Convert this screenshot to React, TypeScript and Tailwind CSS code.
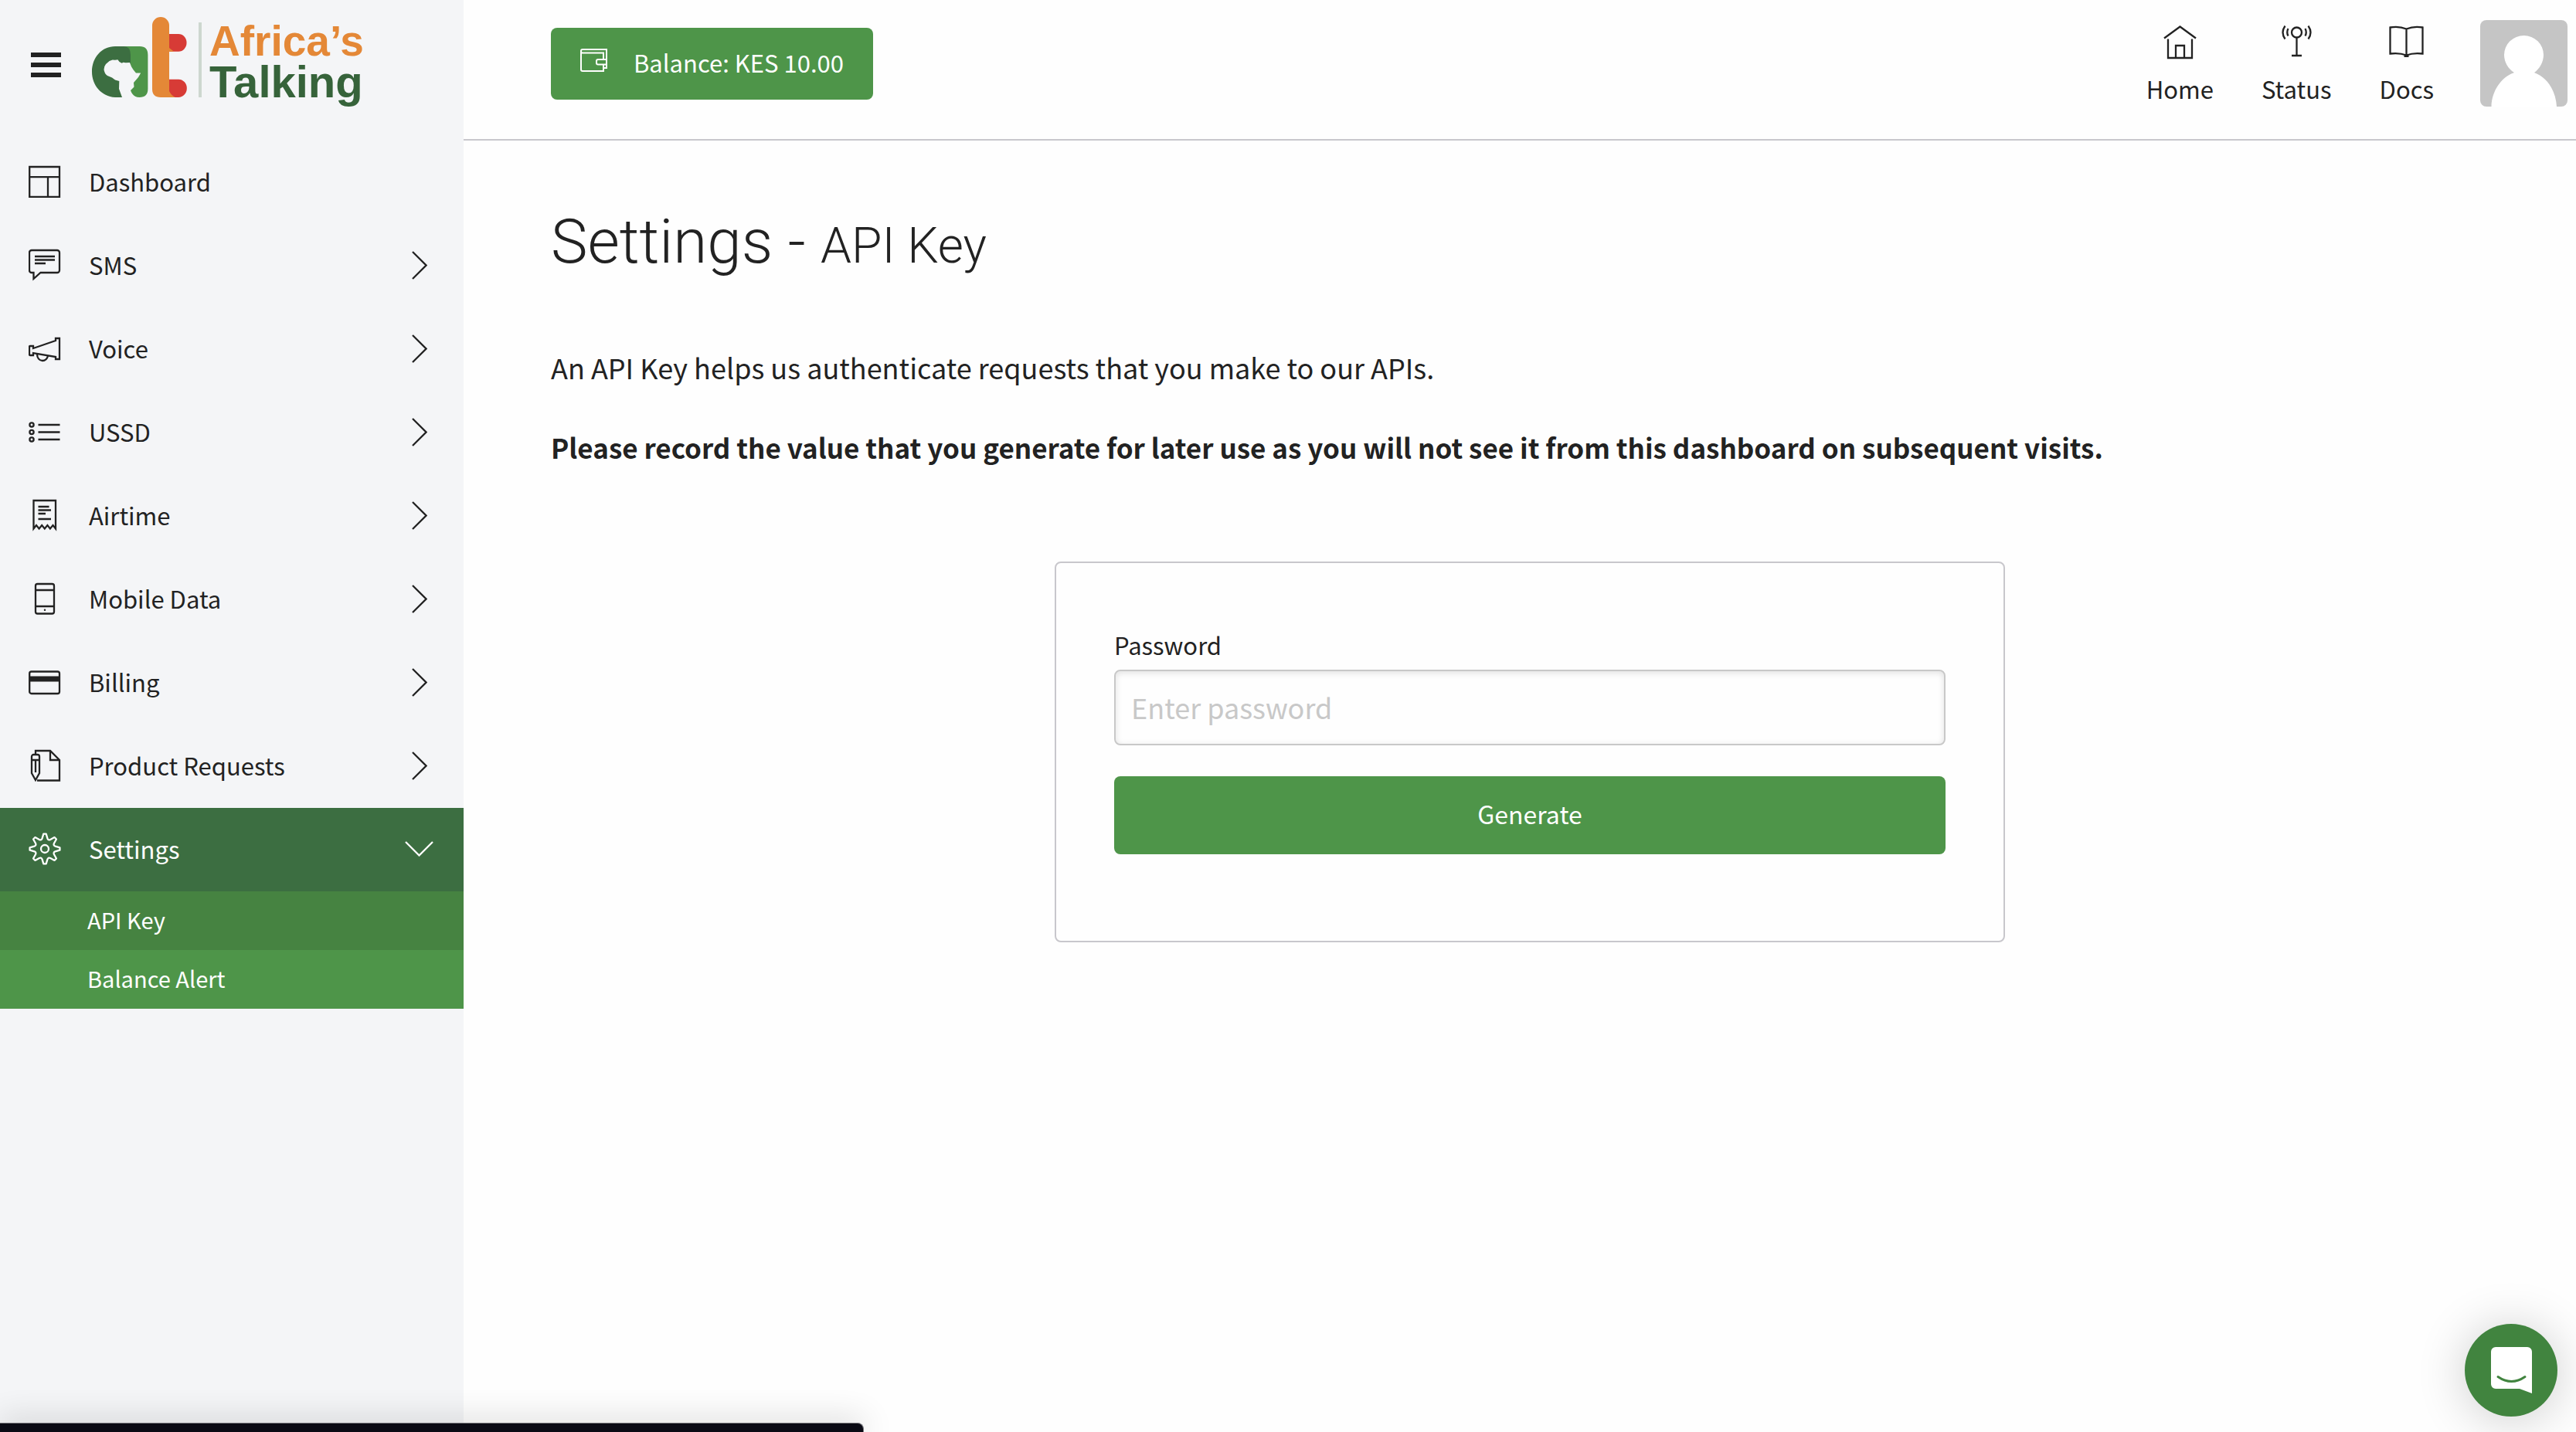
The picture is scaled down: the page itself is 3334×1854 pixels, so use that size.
import type { ReactNode } from 'react';

const gearPath = (() => {
  const point = (radius: number, degrees: number) => {
    const a = (degrees * Math.PI) / 180;
    return `${(21 + radius * Math.sin(a)).toFixed(2)} ${(21 - radius * Math.cos(a)).toFixed(2)}`;
  };
  const teeth: string[] = [];
  for (let k = 0; k < 8; k += 1) {
    const a = k * 45;
    teeth.push(`${point(19.5, a - 5)}L${point(19.5, a + 5)}L${point(14, a + 14)}Q${point(11.5, a + 22.5)} ${point(14, a + 31)}`);
  }
  return `M${teeth.join('L')}Z`;
})();

function LineIcon({ children }: { children: ReactNode }) {
  return (
    <svg
      className="h-[42px] w-[42px] shrink-0"
      viewBox="0 0 42 42"
      fill="none"
      stroke="currentColor"
      strokeWidth="2.3"
      aria-hidden="true"
    >
      {children}
    </svg>
  );
}

type NavEntry = { label: string; icon: ReactNode; expandable: boolean };

const entries: NavEntry[] = [
  {
    label: 'Dashboard',
    expandable: false,
    icon: <path d="M1.200 2h38.800v38.800H1.200zM1 15.200h39M25 15v26" />,
  },
  {
    label: 'SMS',
    expandable: true,
    icon: (
      <>
        <path d="M4 2h33a3 3 0 0 1 3 3v23a3 3 0 0 1-3 3H15.500l-9 8V31H4a3 3 0 0 1-3-3V5a3 3 0 0 1 3-3z" />
        <path d="M8 10h26M8 14.500h26M8 19h14" />
      </>
    ),
  },
  {
    label: 'Voice',
    expandable: true,
    icon: (
      <>
        <path d="M2 18h4v3L35 11V8h5v27h-5v-3L6 27v3H2a1 1 0 0 1-1-1V19a1 1 0 0 1 1-1z" />
        <path d="M11 28.500c0 5 3 8.500 7 8.500s6-2.500 7-6" />
      </>
    ),
  },
  {
    label: 'USSD',
    expandable: true,
    icon: (
      <>
        <circle cx="4" cy="12" r="2.600" />
        <circle cx="4" cy="21.500" r="2.600" />
        <circle cx="4" cy="31" r="2.600" />
        <path d="M12.500 12h28M12.500 21.500h28M12.500 31h28" />
      </>
    ),
  },
  {
    label: 'Airtime',
    expandable: true,
    icon: (
      <>
        <path d="M6.500 38.500V2h28.500v36.500l-3.500-4.500-3.600 4.500-3.500-4.500-3.600 4.500-3.600-4.500-3.600 4.500-3.600-4.500z" />
        <path d="M12.500 10h14M12.500 14.500h16.500M12.500 19h9.500M12.500 26h16.500" />
      </>
    ),
  },
  {
    label: 'Mobile Data',
    expandable: true,
    icon: (
      <>
        <rect x="9" y="2" width="24" height="38.500" rx="2.500" />
        <path d="M9 10h24M9 31h24" />
        <circle cx="21" cy="35.700" r="1.200" fill="currentColor" stroke="none" />
      </>
    ),
  },
  {
    label: 'Billing',
    expandable: true,
    icon: (
      <>
        <rect x="1.200" y="7.500" width="38.800" height="28.500" rx="2.500" />
        <path d="M1 17h39" strokeWidth="7" />
      </>
    ),
  },
  {
    label: 'Product Requests',
    expandable: true,
    icon: (
      <>
        <path d="M9 7V2h19l12 12v26.500H11" />
        <path d="M28 2v12h12" />
        <path d="M4 14v17l5 9 5-9V9.500a2.500 2.500 0 0 0-2.500-2.500h-5A2.500 2.500 0 0 0 4 9.500V14h10M9 15v15" />
      </>
    ),
  },
];

function ChevronRight() {
  return (
    <svg className="h-[37px] w-5" viewBox="0 0 20 37" fill="none" stroke="currentColor" strokeWidth="2.3" aria-hidden="true">
      <path d="M1 1l17.500 17.500L1 36" />
    </svg>
  );
}

function ChevronDown() {
  return (
    <svg className="h-5 w-[37px]" viewBox="0 0 37 20" fill="none" stroke="currentColor" strokeWidth="2.3" aria-hidden="true">
      <path d="M1 1l17.500 17.500L36 1" />
    </svg>
  );
}

function Logo() {
  return (
    <svg className="h-[120px] w-[350px] overflow-visible" viewBox="0 0 350 120" role="img" aria-label="Africa's Talking">
      <path fill="#4e9549" d="M30 38h32q10.400 0 10.400 11v44q0 11-10.900 11-6 0-11.500-5H40z" />
      <path fill="#3c6e41" d="M39 104H30C12 103 0 88 0 71 0 52 13 38 30 38h11q9 0 9 11v14L39 90z" />
      <path
        fill="#f4f5f7"
        d="M15.500 68q0-4 2.500-7l4.600-4 4-1.500 3.400.2 3.400-.4L35.500 58l3.200 1.700 1.800-1 3.100.6 5.400-.3 2 5.300 2.500 4 3.500 4.200 6.200-.1-3.200 5.600-6 7 .5 5.500-4.500 4.500q2 6 7.500 9H39l-4-11 .3-10L30 81.500l-4-3-6-2.500q-4-3-4.500-8z"
      />
      <path fill="#d73b36" d="M98 22h14a10.500 11.300 0 0 1 0 22.700H98zM98 80.700h14a10.500 11.300 0 0 1 0 23.300H98z" />
      <path fill="#e48837" d="M78 11a11 11 0 0 1 22 0v29l6 4.700h-6V96q3 6 8 8H89q-11 0-11-11z" />
      <path fill="#cdd7cf" d="M138 7h4v97h-4z" />
      <text x="152" y="50" fill="#e48837" className="font-['Liberation_Sans',sans-serif] text-[55px] leading-none font-bold">
        Africa’s
      </text>
      <text x="152" y="104" fill="#36633a" className="font-['Liberation_Sans',sans-serif] text-[58px] leading-none font-bold">
        Talking
      </text>
    </svg>
  );
}

function Sidebar() {
  return (
    <aside className="w-[600px] shrink-0 bg-[#f4f5f7]">
      <div className="flex h-[182px] items-start pl-10 pt-[22px]">
        <button type="button" aria-label="Toggle menu" className="mt-[46px] mr-10 flex flex-col gap-[7px]">
          <span className="h-1.5 w-[39px] bg-[#222]" />
          <span className="h-1.5 w-[39px] bg-[#222]" />
          <span className="h-1.5 w-[39px] bg-[#222]" />
        </button>
        <a href="#home">
          <Logo />
        </a>
      </div>
      <nav aria-label="Main">
        {entries.map((entry) => (
          <a key={entry.label} href="#section" className="flex h-27 items-center pr-[47px] pb-0.5 pl-[37px] text-[31px]">
            <LineIcon>{entry.icon}</LineIcon>
            <span className="ml-9 flex-1">{entry.label}</span>
            {entry.expandable && <ChevronRight />}
          </a>
        ))}
        <button
          type="button"
          aria-expanded="true"
          className="flex h-27 w-full items-center bg-[#3c6e41] pr-[39px] pb-0.5 pl-[37px] text-left text-[31px] text-white"
        >
          <LineIcon>
            <path d={gearPath} strokeLinejoin="round" />
            <circle cx="21" cy="21" r="5" />
          </LineIcon>
          <span className="ml-9 flex-1">Settings</span>
          <ChevronDown />
        </button>
        <a href="#api-key" aria-current="page" className="flex h-19 items-center bg-[#468341] pb-0.5 pl-[113px] text-[29px] text-white">
          API Key
        </a>
        <a href="#balance-alert" className="flex h-19 items-center bg-[#4e9549] pb-0.5 pl-[113px] text-[29px] text-white">
          Balance Alert
        </a>
      </nav>
    </aside>
  );
}

function HeaderLink({ label, children }: { label: string; children: ReactNode }) {
  return (
    <a href="#top" className="flex flex-col items-center gap-3.5">
      <svg className="h-11 w-[45px]" viewBox="0 0 45 44" fill="none" stroke="currentColor" strokeWidth="2.3" aria-hidden="true">
        {children}
      </svg>
      <span className="leading-[48px]">{label}</span>
    </a>
  );
}

function Header() {
  return (
    <header className="flex h-[182px] items-start justify-between border-b-2 border-[#c8c7cc] pr-[11px] pl-[113px] text-[31px]">
      <button type="button" className="mt-9 flex h-[93px] items-center rounded-lg bg-[#4e9549] px-[38px] text-white">
        <svg className="mb-2.5 h-[30px] w-[35px]" viewBox="0 0 35 30" fill="none" stroke="currentColor" strokeWidth="2" aria-hidden="true">
          <path d="M34 13V1H3a2 2 0 0 0-2 2v24a2 2 0 0 0 2 2h27v-8M1 3.500Q1 5.500 3 5.500h27V13" />
          <path d="M34 14H23a2 2 0 0 0-2 2v2.500a2 2 0 0 0 2 2h11zM34 20v5h-4" />
        </svg>
        <span className="mb-0.5 ml-[34px]">Balance: KES 10.00</span>
      </button>
      <div className="flex items-start gap-[60px] pt-[26px]">
        <nav aria-label="Quick links" className="flex gap-[62px] pt-[7px]">
          <HeaderLink label="Home">
            <path d="M2 16.500L22.500 1.500l20.500 15M7 17.500V42h31V17.500M17 42V26h11v16" />
          </HeaderLink>
          <HeaderLink label="Status">
            <circle cx="22.500" cy="9" r="6.500" />
            <path d="M22.500 15.500v23M16 39h13" />
            <path d="M11.500 4q-2.500 5 0 9.500M7.500.5Q1.500 9 7.500 17.500M33.500 4q2.500 5 0 9.500M37.500.5q6 8.500 0 17" />
          </HeaderLink>
          <HeaderLink label="Docs">
            <path d="M22.500 4.500Q13 .5 1.500 2.500v34q12-1.500 21 2 9-3.500 21-2v-34Q32 .5 22.500 4.500v34" />
            <path d="M19.500 39.500h6" strokeWidth="3" />
          </HeaderLink>
        </nav>
        <button type="button" aria-label="Account" className="overflow-hidden rounded-lg bg-[#c5c5c5]">
          <svg className="h-28 w-[113px]" viewBox="0 0 113 112" fill="#fff" aria-hidden="true">
            <path d="M44 68C36 63 31 54 31 45a25.500 25 0 0 1 51 0c0 9-5 18-12 23 17 6 28 24 29 44H14.500C15 92 27 74 44 68z" />
          </svg>
        </button>
      </div>
    </header>
  );
}

function ApiKeyPage() {
  return (
    <main className="pt-[83px] pr-[87px] pl-[113px]">
      <h1 className="font-['Roboto',sans-serif] text-[80px] leading-[96px] font-light">
        Settings - <small className="text-[64px]">API Key</small>
      </h1>
      <p className="mt-20 text-[36px] leading-[56px]">
        An API Key helps us authenticate requests that you make to our APIs.
      </p>
      <p className="mt-12 text-[35px] leading-[56px] font-semibold">
        Please record the value that you generate for later use as you will not see it from this dashboard on subsequent visits.
      </p>
      <form
        className="mx-auto mt-30 flex max-w-[1230px] flex-col rounded-lg border-2 border-[#c8c7cc] px-[75px] pt-[82px] pb-28"
        onSubmit={(event) => event.preventDefault()}
      >
        <label htmlFor="password" className="text-[31px] leading-[48px]">
          Password
        </label>
        <input
          id="password"
          type="password"
          placeholder="Enter password"
          className="mt-2 h-[98px] rounded-lg border-2 border-[#c8c8c8] bg-[#fefefe] px-5 pb-0.5 text-[36px] shadow-[inset_0_2px_8px_rgba(0,0,0,0.12)] placeholder:text-[#c8c8c8]"
        />
        <button type="submit" className="mt-10 h-[101px] rounded-lg bg-[#4e9549] pb-1.5 text-[32px] text-white">
          Generate
        </button>
      </form>
    </main>
  );
}

export default function App() {
  return (
    <div className="relative flex min-h-screen overflow-hidden bg-[#fefefe] font-['Noto_Sans_CJK_SC',sans-serif] text-[#222]">
      <Sidebar />
      <div className="min-w-0 flex-1">
        <Header />
        <ApiKeyPage />
      </div>
      <button
        type="button"
        aria-label="Open chat"
        className="fixed right-6 bottom-5 flex h-30 w-30 items-center justify-center rounded-full bg-[#41843f] shadow-[0_4px_64px_rgba(0,0,0,0.2)]"
      >
        <svg className="h-[60px] w-[53px]" viewBox="0 0 53 60" aria-hidden="true">
          <path fill="#fff" d="M6 0h41a6 6 0 0 1 6 6v54l-16-6H6a6 6 0 0 1-6-6V6a6 6 0 0 1 6-6z" />
          <path d="M9 38.500q17.500 12 35 0" fill="none" stroke="#41843f" strokeWidth="3" strokeLinecap="round" />
        </svg>
      </button>
      <div className="fixed bottom-0 left-0 h-3 w-[1118px] rounded-tr-lg border-t border-r border-[#77777c] bg-[#0a0a14] shadow-[0_0_40px_rgba(0,0,0,0.3)]" />
    </div>
  );
}
